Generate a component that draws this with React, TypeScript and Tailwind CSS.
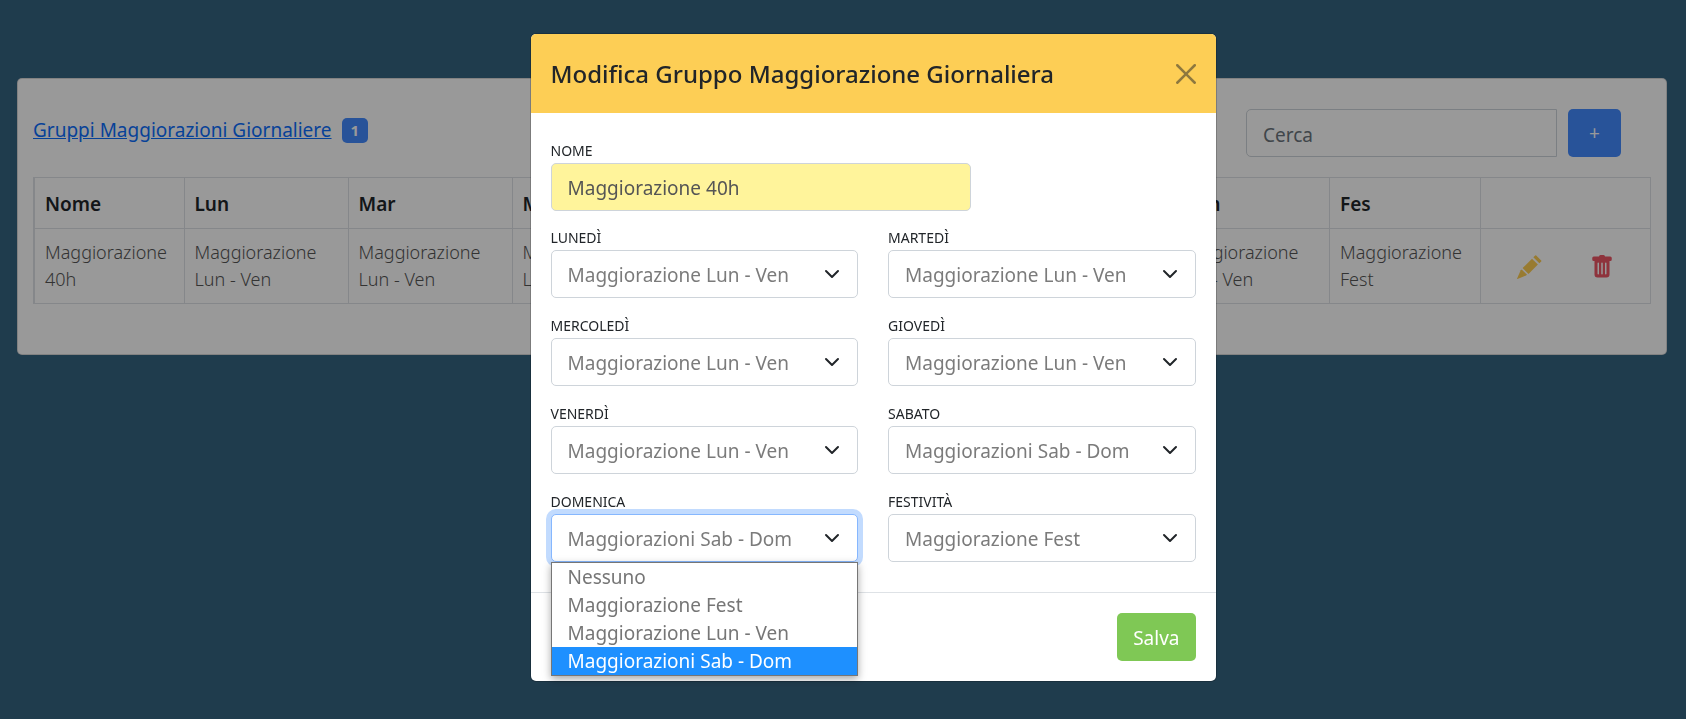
import { useState } from "react";
import type { ReactNode } from "react";
import { BsTrashFill } from "react-icons/bs";

type Day = {
  id: string;
  short: string;
  label: string;
  value: string;
};

const options = ["Nessuno", "Maggiorazione Fest", "Maggiorazione Lun - Ven", "Maggiorazioni Sab - Dom"];

const days: Day[] = [
  { id: "lun", short: "Lun", label: "Lunedì", value: "Maggiorazione Lun - Ven" },
  { id: "mar", short: "Mar", label: "Martedì", value: "Maggiorazione Lun - Ven" },
  { id: "mer", short: "Mer", label: "Mercoledì", value: "Maggiorazione Lun - Ven" },
  { id: "gio", short: "Gio", label: "Giovedì", value: "Maggiorazione Lun - Ven" },
  { id: "ven", short: "Ven", label: "Venerdì", value: "Maggiorazione Lun - Ven" },
  { id: "sab", short: "Sab", label: "Sabato", value: "Maggiorazioni Sab - Dom" },
  { id: "dom", short: "Dom", label: "Domenica", value: "Maggiorazioni Sab - Dom" },
  { id: "fes", short: "Fes", label: "Festività", value: "Maggiorazione Fest" }
];

const savedRow = [
  "Maggiorazione Lun - Ven",
  "Maggiorazione Lun - Ven",
  "Maggiorazione Lun - Ven",
  "Maggiorazione Lun - Ven",
  "Maggiorazione Lun - Ven",
  "Maggiorazione Lun - Ven",
  "Maggiorazione Lun - Ven",
  "Maggiorazione Fest"
];

export default function App() {
  return (
    <div className="min-h-screen bg-[#356480] font-['Noto_Sans',sans-serif] text-[#212529]">
      <GroupsPage />
      <div className="fixed inset-0 flex items-start justify-center overflow-auto bg-black/40 pt-[34px] pl-[60px]">
        <EditModal />
      </div>
    </div>
  );
}

function GroupsPage() {
  return (
    <main className="pt-[78px] pr-[19px] pl-[17px]">
      <section className="rounded-[5px] border border-black/15 bg-white px-[15px] pt-[30px] pb-[50px]">
        <div className="mb-5 flex items-start justify-between">
          <div className="flex items-center gap-[10px] pt-[6px]">
            <a href="#gruppi" className="text-[19px] leading-[30px] text-[#0d6efd] underline">
              Gruppi Maggiorazioni Giornaliere
            </a>
            <span className="rounded-[5px] bg-[#438aff] px-[9px] text-[15px] leading-[25px] font-bold text-white">1</span>
          </div>
          <div className="mr-[30px] flex gap-[11px]">
            <input
              aria-label="Cerca"
              placeholder="Cerca"
              className="h-12 w-[311px] rounded-l-[5px] border border-[#ced4da] px-4 pt-[3px] text-[19px] placeholder:text-[#6c757d]"
            />
            <button type="button" className="h-12 w-[53px] rounded-[5px] bg-[#438aff] text-[19px] text-white">
              +
            </button>
          </div>
        </div>

        <table className="w-full table-fixed border-collapse border border-l-2 border-[#dee2e6] text-left">
          <colgroup>
            <col className="w-[150px]" />
            <col className="w-[164px]" />
            <col className="w-[164px]" />
            <col />
            <col />
            <col />
            <col />
            <col />
            <col className="w-[151px]" />
            <col className="w-[170px]" />
          </colgroup>
          <thead>
            <tr className="h-[51px]">
              <Th>Nome</Th>
              {days.map((day) => (
                <Th key={day.id}>{day.short}</Th>
              ))}
              <Th />
            </tr>
          </thead>
          <tbody>
            <tr className="h-[75px]">
              <Td>Maggiorazione 40h</Td>
              {savedRow.map((text, index) => (
                <Td key={days[index].id}>{text}</Td>
              ))}
              <td className="border border-[#dee2e6]">
                <div className="flex items-center justify-around px-3 pt-[2px]">
                  <button type="button" aria-label="Modifica" className="text-[#fecd52]">
                    <PencilIcon />
                  </button>
                  <button type="button" aria-label="Elimina" className="text-[#ed5565]">
                    <BsTrashFill className="h-6 w-6" />
                  </button>
                </div>
              </td>
            </tr>
          </tbody>
        </table>
      </section>
    </main>
  );
}

function PencilIcon() {
  return (
    <svg viewBox="0 0 25 24" className="h-6 w-[25px]" fill="currentColor">
      <path d="M18.2.4q.5-.5 1 0l5 5q.5.5 0 1L22.4 8.2 16.3 2.3z" />
      <path d="M15 3.7 20.9 9.6 11.5 19 5.6 13.1z" />
      <path d="M4.7 14.4 10 19.7 9 20.6.4 24Q0 24 .1 23.5L3.7 15.2z" />
    </svg>
  );
}

function Th({ children }: { children?: ReactNode }) {
  return <th className="border border-[#dee2e6] px-[10px] pt-[3px] text-[19px] font-semibold">{children}</th>;
}

function Td({ children }: { children: ReactNode }) {
  return (
    <td className="border border-[#dee2e6] px-[10px] text-[18px] leading-[27px] font-light text-[#555]">{children}</td>
  );
}

function EditModal() {
  const [name, setName] = useState("Maggiorazione 40h");
  const [values, setValues] = useState(days.map((day) => day.value));
  const [openId, setOpenId] = useState<string | null>("dom");

  const update = (index: number, value: string) => {
    setValues(values.map((item, i) => (i === index ? value : item)));
    setOpenId(null);
  };

  return (
    <div role="dialog" aria-labelledby="modal-title" className="w-[685px] rounded-[5px] bg-white shadow-[0_0_0_1px_rgba(0,0,0,0.2)]">
      <header className="flex h-[79px] items-center justify-between rounded-t-[5px] bg-[#fdce55] px-5">
        <h5 id="modal-title" className="text-[24px] font-medium">
          Modifica Gruppo Maggiorazione Giornaliera
        </h5>
        <button type="button" aria-label="Chiudi" className="opacity-50">
          <svg viewBox="0 0 16 16" className="h-5 w-5" fill="currentColor">
            <path d="M.293.293a1 1 0 011.414 0L8 6.586 14.293.293a1 1 0 111.414 1.414L9.414 8l6.293 6.293a1 1 0 01-1.414 1.414L8 9.414l-6.293 6.293a1 1 0 01-1.414-1.414L6.586 8 .293 1.707a1 1 0 010-1.414z" />
          </svg>
        </button>
      </header>

      <form className="px-5 py-[30px]">
        <div className="mb-[19px] w-[420px]">
          <FieldLabel id="nome">Nome</FieldLabel>
          <input
            id="nome"
            value={name}
            onChange={(event) => setName(event.target.value)}
            className="h-12 w-full rounded-[5px] border border-[#ced4da] bg-[#fff49b] px-4 pt-[2px] text-[19px] text-[#555]"
          />
        </div>
        <div className="grid grid-cols-2 gap-x-[30px] gap-y-5">
          {days.map((day, index) => (
            <DaySelect
              key={day.id}
              day={day}
              value={values[index]}
              open={openId === day.id}
              onChange={(value) => update(index, value)}
            />
          ))}
        </div>
      </form>

      <footer className="flex justify-end border-t border-[#dee2e6] p-5">
        <button type="button" className="h-12 rounded-[5px] bg-[#7fc855] px-4 pt-[2px] text-[19px] text-white">
          Salva
        </button>
      </footer>
    </div>
  );
}

function FieldLabel({ id, children }: { id: string; children: ReactNode }) {
  return (
    <label htmlFor={id} className="mb-1 block text-[14px] leading-4 uppercase">
      {children}
    </label>
  );
}

function DaySelect({
  day,
  value,
  open,
  onChange
}: {
  day: Day;
  value: string;
  open: boolean;
  onChange: (value: string) => void;
}) {
  return (
    <div>
      <FieldLabel id={day.id}>{day.label}</FieldLabel>
      <div className="relative">
        <select
          id={day.id}
          value={value}
          onChange={(event) => onChange(event.target.value)}
          className={
            open
              ? "h-12 w-full appearance-none rounded-[5px] border border-[#86b7fe] bg-white px-4 pt-[2px] text-[19px] text-[#7b7b7b] ring-5 ring-[#c2dbfe] outline-none"
              : "h-12 w-full appearance-none rounded-[5px] border border-[#ced4da] bg-white px-4 pt-[2px] text-[19px] text-[#7b7b7b]"
          }
        >
          {options.map((option) => (
            <option key={option}>{option}</option>
          ))}
        </select>
        <svg
          viewBox="0 0 16 16"
          className="pointer-events-none absolute top-4 right-[18px] h-4 w-4"
          fill="none"
          stroke="#212529"
          strokeWidth="2"
          strokeLinecap="round"
          strokeLinejoin="round"
        >
          <path d="M2 5l6 6 6-6" />
        </svg>
        {open ? (
          <ul className="absolute inset-x-0 top-full z-10 border border-[#767676] bg-white text-[19px] leading-7 text-[#767676] shadow-[0_3px_8px_rgba(0,0,0,0.35)]">
            {options.map((option) => (
              <li
                key={option}
                onClick={() => onChange(option)}
                className={option === value ? "bg-[#1e90ff] px-4 text-white" : "px-4"}
              >
                {option}
              </li>
            ))}
          </ul>
        ) : null}
      </div>
    </div>
  );
}
